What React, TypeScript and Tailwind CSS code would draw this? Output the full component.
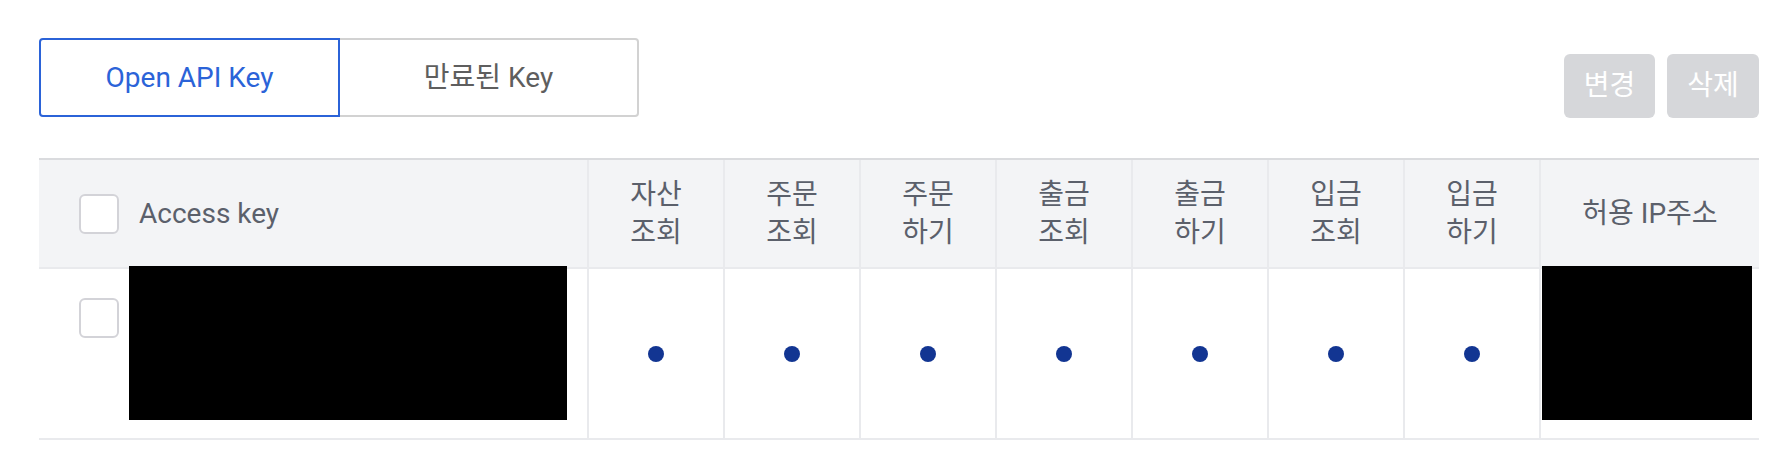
import React from 'react';

const permissions = [
  ['자산', '조회'],
  ['주문', '조회'],
  ['주문', '하기'],
  ['출금', '조회'],
  ['출금', '하기'],
  ['입금', '조회'],
  ['입금', '하기'],
];

const font = "font-['Roboto','Noto_Sans_CJK_KR',sans-serif]";

const Checkbox: React.FC<{ className?: string }> = ({ className = '' }) => (
  <span
    className={`block w-[40px] h-[40px] shrink-0 rounded-[6px] border-2 border-[#d3d3d8] bg-white ${className}`}
  />
);

export default function App() {
  return (
    <div className={`w-[1788px] h-[456px] bg-white pt-[38px] pl-[39px] pr-[29px] ${font}`}>
      <div className="flex items-end justify-between">
        <div className="flex">
          <button className="w-[301px] h-[79px] rounded-l-[4px] border-2 border-[#2b63d8] text-[28px] text-[#2b63d8]">
            Open API Key
          </button>
          <button className="w-[299px] h-[79px] rounded-r-[4px] border-2 border-l-0 border-[#d2d2d2] text-[28px] text-[#5e5e5e]">
            만료된 Key
          </button>
        </div>
        <div className="flex gap-[12px] mb-[-1px]">
          <button className="w-[91px] h-[64px] rounded-[6px] bg-[#d6d7da] text-[28px] text-white">
            변경
          </button>
          <button className="w-[92px] h-[64px] rounded-[6px] bg-[#d6d7da] text-[28px] text-white">
            삭제
          </button>
        </div>
      </div>

      <div className="mt-[41px] border-t-2 border-[#dadbde]">
        <div className="grid grid-cols-[548px_repeat(7,136px)_1fr] h-[109px] bg-[#f3f4f6] border-b-2 border-[#e9eaed] text-[28px] text-[#5b606b]">
          <div className="flex items-center pl-[40px] gap-[20px]">
            <Checkbox />
            <span>Access key</span>
          </div>
          {permissions.map(([a, b], i) => (
            <div
              key={i}
              className="flex flex-col items-center justify-center border-l-2 border-[#e9eaed] leading-[38px]"
            >
              <span>{a}</span>
              <span>{b}</span>
            </div>
          ))}
          <div className="flex items-center justify-center border-l-2 border-[#e9eaed]">
            허용 IP주소
          </div>
        </div>

        <div className="grid grid-cols-[548px_repeat(7,136px)_1fr] h-[171px] border-b-2 border-[#e9eaed]">
          <div className="flex items-start pl-[40px]">
            <Checkbox className="mt-[29px]" />
            <div className="ml-[10px] -mt-[3px] w-[438px] h-[154px] bg-black" />
          </div>
          {permissions.map((_, i) => (
            <div key={i} className="flex items-center justify-center border-l-2 border-[#e9eaed]">
              <span className="block w-[16px] h-[16px] rounded-full bg-[#123592]" />
            </div>
          ))}
          <div className="flex items-start border-l-2 border-[#e9eaed] pl-[1px]">
            <div className="-mt-[3px] w-[210px] h-[154px] bg-black" />
          </div>
        </div>
      </div>
    </div>
  );
}
